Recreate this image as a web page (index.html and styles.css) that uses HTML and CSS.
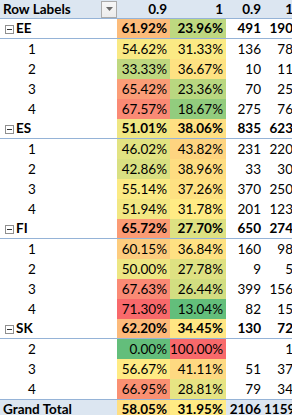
FILE: index.html
```html
<!DOCTYPE html>
<html>
<head>
<meta charset="utf-8">
<link rel="stylesheet" href="styles.css">
</head>
<body>
<table class="pivot">
  <colgroup>
    <col class="c-label"><col class="c-pct1"><col class="c-pct2"><col class="c-cnt1"><col class="c-cnt2">
  </colgroup>
  <thead>
    <tr class="hdr">
      <th class="lbl">
        <div class="hdr-inner"><span>Row Labels</span><span class="dd"><svg width="7" height="4" viewBox="0 0 7 4"><path d="M0 0h7L3.5 4z" fill="#6b6b6b"/></svg></span></div>
      </th>
      <th>0.9</th><th>1</th><th>0.9</th><th>1</th>
    </tr>
  </thead>
  <tbody>
    <tr class="grp"><td class="lbl"><span class="mx"></span>EE</td><td style="background:#FCBC7B">61.92%</td><td style="background:#BED880">23.96%</td><td>491</td><td>190</td></tr>
    <tr><td class="lbl sub">1</td><td style="background:#F9E984">54.62%</td><td style="background:#FBEA84">31.33%</td><td>136</td><td>78</td></tr>
    <tr><td class="lbl sub">2</td><td style="background:#BFD880">33.33%</td><td style="background:#FEE282">36.67%</td><td>10</td><td>11</td></tr>
    <tr><td class="lbl sub">3</td><td style="background:#FB9D77">65.42%</td><td style="background:#B9D780">23.36%</td><td>70</td><td>25</td></tr>
    <tr><td class="lbl sub">4</td><td style="background:#FA8A75">67.57%</td><td style="background:#92CC7E">18.67%</td><td>275</td><td>76</td></tr>

    <tr class="grp"><td class="lbl"><span class="mx"></span>ES</td><td style="background:#EFE683">51.01%</td><td style="background:#FEDF82">38.06%</td><td>835</td><td>623</td></tr>
    <tr><td class="lbl sub">1</td><td style="background:#E2E382">46.02%</td><td style="background:#FED480">43.82%</td><td>231</td><td>220</td></tr>
    <tr><td class="lbl sub">2</td><td style="background:#D9E082">42.86%</td><td style="background:#FEDD81">38.96%</td><td>33</td><td>30</td></tr>
    <tr><td class="lbl sub">3</td><td style="background:#FBEA84">55.14%</td><td style="background:#FEE182">37.26%</td><td>370</td><td>250</td></tr>
    <tr><td class="lbl sub">4</td><td style="background:#F2E783">51.94%</td><td style="background:#FFEB84">31.78%</td><td>201</td><td>123</td></tr>

    <tr class="grp"><td class="lbl"><span class="mx"></span>FI</td><td style="background:#FB9B75">65.72%</td><td style="background:#DDE182">27.70%</td><td>650</td><td>274</td></tr>
    <tr><td class="lbl sub">1</td><td style="background:#FDCC7E">60.15%</td><td style="background:#FEE182">36.84%</td><td>160</td><td>98</td></tr>
    <tr><td class="lbl sub">2</td><td style="background:#EDE683">50.00%</td><td style="background:#DEE182">27.78%</td><td>9</td><td>5</td></tr>
    <tr><td class="lbl sub">3</td><td style="background:#FA8A75">67.63%</td><td style="background:#D2DE81">26.44%</td><td>399</td><td>156</td></tr>
    <tr><td class="lbl sub">4</td><td style="background:#F8696B">71.30%</td><td style="background:#63BE7B">13.04%</td><td>82</td><td>15</td></tr>

    <tr class="grp"><td class="lbl"><span class="mx"></span>SK</td><td style="background:#FCBA7B">62.20%</td><td style="background:#FFE683">34.45%</td><td>130</td><td>72</td></tr>
    <tr><td class="lbl sub">2</td><td style="background:#63BE7B">0.00%</td><td style="background:#F8696B">100.00%</td><td></td><td>1</td></tr>
    <tr><td class="lbl sub">3</td><td style="background:#FFEB84">56.67%</td><td style="background:#FED981">41.11%</td><td>51</td><td>37</td></tr>
    <tr><td class="lbl sub">4</td><td style="background:#FA9072">66.95%</td><td style="background:#E6E483">28.81%</td><td>79</td><td>34</td></tr>

    <tr class="total"><td class="lbl">Grand Total</td><td style="background:#FFDF82">58.05%</td><td style="background:#FFEB84">31.95%</td><td class="tb">2106</td><td class="tb">1159</td></tr>
  </tbody>
</table>
</body>
</html>
```

FILE: styles.css
```css
html, body {
  margin: 0;
  padding: 0;
  background: #ffffff;
  overflow: hidden;
}
body {
  width: 292px;
  height: 415px;
  font-family: Lato, "Open Sans", sans-serif;
  font-size: 13.5px;
  color: #000;
}
.pivot {
  border-collapse: separate;
  border-spacing: 0;
  table-layout: fixed;
  width: 296px;
}
.c-label { width: 117px; }
.c-pct1 { width: 53px; }
.c-pct2 { width: 56px; }
.c-cnt1 { width: 38px; }
.c-cnt2 { width: 32px; }
.pivot th, .pivot td {
  height: 20px;
  padding: 0 3px 0 0;
  text-align: right;
  white-space: nowrap;
  overflow: hidden;
  box-sizing: border-box;
  line-height: 19px;
  vertical-align: middle;
}
.hdr th {
  background: #DCE6F1;
  font-weight: bold;
  height: 19px;
  line-height: 18px;
  border-bottom: 1px solid #95B3D7;
}
.hdr .lbl {
  padding: 0;
  text-align: left;
}
.hdr-inner {
  display: flex;
  align-items: center;
  justify-content: space-between;
  height: 18px;
  padding-left: 3px;
}
.dd {
  width: 14px;
  height: 15px;
  border: 1px solid #ABABAB;
  background: linear-gradient(#f7f7f7, #ececec);
  display: flex;
  align-items: center;
  justify-content: center;
}
.lbl {
  text-align: left !important;
}
.grp td {
  font-weight: bold;
  border-bottom: 1px solid #95B3D7;
}
.grp .lbl {
  padding-left: 5px;
}
.mx {
  display: inline-block;
  width: 7px;
  height: 7px;
  border: 1px solid #8f8f8f;
  margin-right: 2px;
  vertical-align: -0.5px;
  position: relative;
  background: #fff;
}
.mx::after {
  content: "";
  position: absolute;
  left: 1px;
  right: 1px;
  top: 3px;
  height: 1px;
  background: #333;
}
.sub {
  padding-left: 28px !important;
}
.total td {
  font-weight: bold;
  border-top: 1px solid #95B3D7;
}
.total .lbl, .total .tb {
  background: #DCE6F1;
}
.total .lbl {
  padding-left: 3px;
}
```
